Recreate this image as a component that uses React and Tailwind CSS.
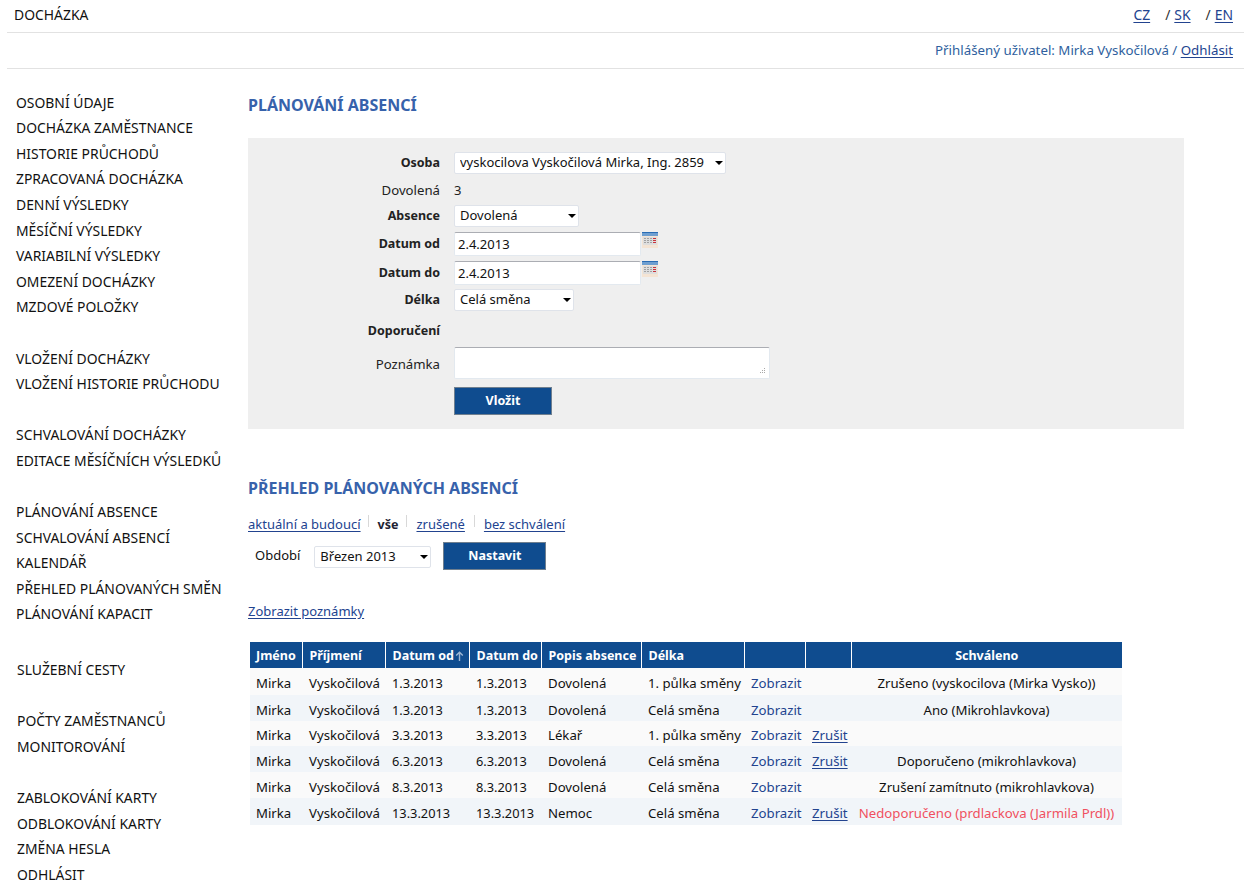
import React from 'react';

const menuGroups = [
    { items: ['OSOBNÍ ÚDAJE', 'DOCHÁZKA ZAMĚSTNANCE', 'HISTORIE PRŮCHODŮ', 'ZPRACOVANÁ DOCHÁZKA', 'DENNÍ VÝSLEDKY', 'MĚSÍČNÍ VÝSLEDKY', 'VARIABILNÍ VÝSLEDKY', 'OMEZENÍ DOCHÁZKY', 'MZDOVÉ POLOŽKY'] },
    { items: ['VLOŽENÍ DOCHÁZKY', 'VLOŽENÍ HISTORIE PRŮCHODU'] },
    { items: ['SCHVALOVÁNÍ DOCHÁZKY', 'EDITACE MĚSÍČNÍCH VÝSLEDKŮ'] },
    { items: ['PLÁNOVÁNÍ ABSENCE', 'SCHVALOVÁNÍ ABSENCÍ', 'KALENDÁŘ', 'PŘEHLED PLÁNOVANÝCH SMĚN', 'PLÁNOVÁNÍ KAPACIT'] },
    { items: ['SLUŽEBNÍ CESTY'], top: 'mt-[30px] pl-px' },
    { items: ['POČTY ZAMĚSTNANCŮ', 'MONITOROVÁNÍ'], top: 'pl-px' },
    { items: ['ZABLOKOVÁNÍ KARTY', 'ODBLOKOVÁNÍ KARTY', 'ZMĚNA HESLA', 'ODHLÁSIT'], top: 'pl-px' },
];

const rows = [
    { from: '1.3.2013', to: '1.3.2013', type: 'Dovolená', len: '1. půlka směny', cancel: false, state: 'Zrušeno (vyskocilova (Mirka Vysko))', h: 'h-[27px]' },
    { from: '1.3.2013', to: '1.3.2013', type: 'Dovolená', len: 'Celá směna', cancel: false, state: 'Ano (Mikrohlavkova)', h: 'h-[26px]' },
    { from: '3.3.2013', to: '3.3.2013', type: 'Lékař', len: '1. půlka směny', cancel: true, state: '', h: 'h-[25px]' },
    { from: '6.3.2013', to: '6.3.2013', type: 'Dovolená', len: 'Celá směna', cancel: true, state: 'Doporučeno (mikrohlavkova)', h: 'h-[26px]' },
    { from: '8.3.2013', to: '8.3.2013', type: 'Dovolená', len: 'Celá směna', cancel: false, state: 'Zrušení zamítnuto (mikrohlavkova)', h: 'h-[26px]' },
    { from: '13.3.2013', to: '13.3.2013', type: 'Nemoc', len: 'Celá směna', cancel: true, state: 'Nedoporučeno (prdlackova (Jarmila Prdl))', h: 'h-[27px]', red: true },
];

function CalendarIcon() {
    return (
        <svg width="16" height="16" viewBox="0 0 16 16" className="ml-px shrink-0 self-start">
            <rect x="0" y="0" width="16" height="16" fill="#f4e4d4" />
            <rect x="0" y="0" width="16" height="1" fill="#2a6cb4" />
            <rect x="0" y="1" width="16" height="3" fill="#6f9fd0" />
            <rect x="1" y="5" width="14" height="8" fill="#dedede" />
            <path d="M2 6.5h2M5 6.5h2M8 6.5h2M2 8.5h2M5 8.5h2M8 8.5h2M2 10.5h2M5 10.5h2M8 10.5h2" stroke="#a2a2a2" strokeWidth="1" />
            <path d="M11 6.5h3M11 8.5h3M11 10.5h3" stroke="#c8323a" strokeWidth="1" />
        </svg>
    );
}

function Select({ value, width }) {
    return (
        <div className={`relative ${width}`}>
            <select
                defaultValue={value}
                className="h-full w-full appearance-none rounded-[2px] border border-[#dfe3ea] bg-white pl-[5px] text-[13px] text-[#111] outline-none"
            >
                <option>{value}</option>
            </select>
            <span className="pointer-events-none absolute right-[3px] top-1/2 -mt-[2px] h-0 w-0 border-x-[4px] border-t-[4px] border-x-transparent border-t-black"></span>
        </div>
    );
}

function FormRow({ label, bold, height, labelClass = '', children }) {
    return (
        <div className={`flex items-center gap-[14px] ${height}`}>
            <div className={`w-[192px] text-right text-[#222] ${bold ? 'text-[12.5px] font-bold' : 'text-[13.2px]'} ${labelClass}`}>{label}</div>
            {children}
        </div>
    );
}

function DateInput({ value }) {
    return (
        <div className="flex h-[24px] items-start">
            <input
                defaultValue={value}
                className="h-[24px] w-[187px] rounded-[2px] border border-[#e3e9ef] border-t-[#abadb3] bg-white pl-[3px] text-[13px] text-[#111] outline-none"
            />
            <CalendarIcon />
        </div>
    );
}

const Btn = ({ children, width }) => (
    <button className={`h-[28px] ${width} border border-[#6f7f8f] bg-[#0f4c8f] text-[12.5px] font-bold text-white`}>{children}</button>
);

const Lnk = ({ children }) => <a href="#" className="text-[#22438f] underline underline-offset-2">{children}</a>;

const Divider = ({ className }) => <span className={`h-[12px] w-px self-start bg-[#d8d8d8] ${className}`}></span>;

function AbsenceTable() {
    return (
        <table className="ml-[2px] mt-[20px] w-[872px] table-fixed border-collapse text-[13.2px] text-[#111]">
            <colgroup>
                <col className="w-[52px]" />
                <col className="w-[83px]" />
                <col className="w-[84px]" />
                <col className="w-[72px]" />
                <col className="w-[100px]" />
                <col className="w-[103px]" />
                <col className="w-[61px]" />
                <col className="w-[46px]" />
                <col className="w-[271px]" />
            </colgroup>
            <thead>
                <tr className="h-[26px] bg-[#0f4c8f] text-left text-[12.5px] font-bold text-white">
                    <th className="border-r border-white pl-[6px] pt-[3px]">Jméno</th>
                    <th className="border-r border-white pl-[7px] pt-[3px]">Příjmení</th>
                    <th className="border-r border-white pl-[7px] pt-[3px] whitespace-nowrap">
                        Datum od
                        <svg width="9" height="10" viewBox="0 0 9 10" className="ml-px inline-block align-[-1px]">
                            <path d="M4.5 10V1.5M1.2 4.5l3.3-3.3 3.3 3.3" fill="none" stroke="#9db6d4" strokeWidth="1.4" />
                        </svg>
                    </th>
                    <th className="border-r border-white pl-[7px] pt-[3px]">Datum do</th>
                    <th className="border-r border-white pl-[7px] pt-[3px]">Popis absence</th>
                    <th className="border-r border-white pl-[7px] pt-[3px]">Délka</th>
                    <th className="border-r border-white"></th>
                    <th className="border-r border-white"></th>
                    <th className="pt-[3px] text-center">Schváleno</th>
                </tr>
            </thead>
            <tbody>
                {rows.map((row, i) => (
                    <tr key={i} className={`${row.h} ${i % 2 ? 'bg-[#f1f5f9]' : 'bg-[#fafafa]'}`}>
                        <td className="pl-[6px] pt-[5px]">Mirka</td>
                        <td className="pl-[7px] pt-[5px]">Vyskočilová</td>
                        <td className="pl-[7px] pt-[5px] text-[12.8px]">{row.from}</td>
                        <td className="pl-[7px] pt-[5px] text-[12.8px]">{row.to}</td>
                        <td className="pl-[7px] pt-[5px]">{row.type}</td>
                        <td className="pl-[7px] pt-[5px] whitespace-nowrap">{row.len}</td>
                        <td className="pl-[7px] pt-[5px] text-[#22438f]">Zobrazit</td>
                        <td className="pl-[7px] pt-[5px]">{row.cancel && <Lnk>Zrušit</Lnk>}</td>
                        <td className={`pt-[5px] text-center whitespace-nowrap ${row.red ? 'text-[#f0505f]' : ''}`}>{row.state}</td>
                    </tr>
                ))}
            </tbody>
        </table>
    );
}

export default function App() {
    return (
        <div className="min-h-[888px] bg-white font-['Noto_Sans',sans-serif] text-[13px] text-[#111]">
            <div className="ml-[7px] flex h-[33px] items-center justify-between border-b border-[#e2e2e2] pb-px pl-[7px] pr-[11px] text-[13.9px]">
                <span>DOCHÁZKA</span>
                <div className="flex text-[#333]">
                    <Lnk>CZ</Lnk>
                    <span className="ml-[15px] mr-[4px]">/</span>
                    <Lnk>SK</Lnk>
                    <span className="ml-[15px] mr-[4px]">/</span>
                    <Lnk>EN</Lnk>
                </div>
            </div>
            <div className="ml-[7px] flex h-[36px] items-center justify-end border-b border-[#e2e2e2] pr-[11px] text-[13.3px] text-[#2f5f9e]">
                <span>Přihlášený uživatel: Mirka Vyskočilová / <Lnk>Odhlásit</Lnk></span>
            </div>
            <div className="flex">
                <nav className="w-[248px] shrink-0 pl-[16px] pt-[20.6px] text-[13.9px]">
                    {menuGroups.map((group, i) => (
                        <div key={i} className={`${i > 0 ? 'mt-[25.6px]' : ''} ${group.top || ''}`}>
                            {group.items.map(item => (
                                <div key={item} className="h-[25.6px] leading-[25.6px] whitespace-nowrap">{item}</div>
                            ))}
                        </div>
                    ))}
                </nav>
                <main className="w-[936px]">
                    <h1 className="mt-[24px] h-[45px] text-[16px] leading-[24px] font-bold text-[#3762ab]">PLÁNOVÁNÍ ABSENCÍ</h1>
                    <section className="h-[291px] bg-[#efefef] pt-[14px]">
                        <FormRow label="Osoba" bold height="h-[22px]"><Select value="vyskocilova Vyskočilová Mirka, Ing. 2859" width="h-[22px] w-[272px]" /></FormRow>
                        <FormRow label="Dovolená" height="mt-[3px] h-[27px]"><span className="text-[#222]">3</span></FormRow>
                        <FormRow label="Absence" bold height="mt-[1px] h-[22px]"><Select value="Dovolená" width="h-[22px] w-[125px]" /></FormRow>
                        <FormRow label="Datum od" bold height="mt-[5px] h-[24px]"><DateInput value="2.4.2013" /></FormRow>
                        <FormRow label="Datum do" bold height="mt-[5px] h-[24px]"><DateInput value="2.4.2013" /></FormRow>
                        <FormRow label="Délka" bold height="mt-[4px] h-[22px]"><Select value="Celá směna" width="h-[22px] w-[120px]" /></FormRow>
                        <FormRow label="Doporučení" bold height="mt-[9px] h-[22px]"><span></span></FormRow>
                        <FormRow label="Poznámka" labelClass="pt-[3px]" height="mt-[5px] h-[32px]">
                            <div className="relative h-[32px] w-[316px]">
                                <textarea className="block h-full w-full resize-none rounded-[2px] border border-[#e3e9ef] border-t-[#abadb3] bg-white outline-none" />
                                <svg width="8" height="8" viewBox="0 0 8 8" className="absolute bottom-[4px] right-[4px]">
                                    <path d="M6 1h1v1H6zM4 3h1v1H4zM6 3h1v1H6zM2 5h1v1H2zM4 5h1v1H4zM6 5h1v1H6z" fill="#a8a8a8" />
                                </svg>
                            </div>
                        </FormRow>
                        <div className="mt-[8px] pl-[206px]"><Btn width="w-[98px]">Vložit</Btn></div>
                    </section>
                    <h2 className="mt-[47px] text-[16px] leading-[24px] font-bold text-[#3762ab]">PŘEHLED PLÁNOVANÝCH ABSENCÍ</h2>
                    <div className="mt-[15px] flex h-[20px] items-center">
                        <Lnk>aktuální a budoucí</Lnk>
                        <Divider className="ml-[7px] mr-[9px]" />
                        <b className="text-[12.5px] text-[#223]">vše</b>
                        <Divider className="ml-[8px] mr-[9px]" />
                        <Lnk>zrušené</Lnk>
                        <Divider className="mx-[9px]" />
                        <Lnk>bez schválení</Lnk>
                    </div>
                    <div className="mt-[7px] flex h-[28px] items-center pl-[7px]">
                        <span className="mr-[14px]">Období</span>
                        <Select value="Březen 2013" width="mr-[12px] mt-[1px] h-[22px] w-[117px]" />
                        <Btn width="w-[103px]">Nastavit</Btn>
                    </div>
                    <div className="mt-[32px] h-[20px]"><Lnk>Zobrazit poznámky</Lnk></div>
                    <AbsenceTable />
                </main>
            </div>
        </div>
    );
}
